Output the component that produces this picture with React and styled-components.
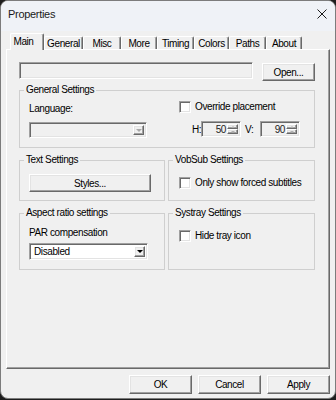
import React from 'react';
import styled, { createGlobalStyle } from 'styled-components';

const Global = createGlobalStyle`
  html, body { margin: 0; padding: 0; background: #1e1e1e; }
  body { width: 336px; height: 400px; overflow: hidden; font-family: "Liberation Sans", Arial, sans-serif; }
  #root { width: 336px; height: 400px; }
`;

const Window = styled.div`
  box-sizing: border-box;
  width: 336px;
  height: 399px;
  background: #f0f0f0;
  border: 1px solid #7c7c7c;
  border-radius: 8px;
  overflow: hidden;
  display: flex;
  flex-direction: column;
  font-size: 10px;
  letter-spacing: -0.4px;
  color: #000;
`;

const TitleBar = styled.div`
  flex: none;
  height: 30px;
  box-sizing: border-box;
  padding: 0 8px 4px 7px;
  display: flex;
  align-items: center;
  justify-content: space-between;
  background: #eff2f7;
`;

const Title = styled.span`
  font-size: 11px;
  letter-spacing: -0.3px;
  color: #1a1a1a;
`;

const TabStrip = styled.div`
  flex: none;
  height: 16px;
  margin-top: 2px;
  padding-left: 9px;
  display: flex;
  align-items: flex-end;
`;

const Tab = styled.div`
  box-sizing: border-box;
  position: relative;
  z-index: ${p => (p.$active ? 2 : 1)};
  width: ${p => p.$w}px;
  height: ${p => (p.$active ? 17 : 13)}px;
  margin-bottom: ${p => (p.$active ? -1 : 0)}px;
  padding-right: ${p => p.$pr || 0}px;
  padding-bottom: ${p => (p.$active ? 2 : 0)}px;
  background: #f0f0f0;
  border-top: 1px solid #fff;
  border-left: 1px solid #fff;
  border-right: 1px solid #696969;
  box-shadow: inset -1px 0 #a0a0a0;
  border-radius: 2px 2px 0 0;
  display: flex;
  align-items: center;
  justify-content: center;
  white-space: nowrap;
`;

const Pane = styled.div`
  flex: none;
  box-sizing: border-box;
  width: 324px;
  height: 320px;
  margin-left: 5px;
  border-top: 1px solid #fff;
  border-left: 1px solid #fff;
  border-right: 1px solid #696969;
  border-bottom: 1px solid #696969;
  box-shadow: inset -1px -1px #a0a0a0;
  padding: 12px 14px 0 12px;
  display: flex;
  flex-direction: column;
`;

const PathRow = styled.div`
  display: flex;
  align-items: flex-start;
  gap: 9px;
  height: 18px;
`;

const sunken = `
  box-sizing: border-box;
  border: 1px solid;
  border-color: #a0a0a0 #ffffff #ffffff #a0a0a0;
  box-shadow: inset 1px 1px #696969, inset -1px -1px #e3e3e3;
`;

const raised = `
  box-sizing: border-box;
  border: 1px solid;
  border-color: #ffffff #696969 #696969 #ffffff;
  box-shadow: inset -1px -1px #a0a0a0, inset 1px 1px #e3e3e3;
  background: #f0f0f0;
`;

const Edit = styled.div`
  ${sunken}
  flex: 1;
  height: 17px;
  background: #f0f0f0;
`;

const Button = styled.div`
  ${raised}
  flex: none;
  width: ${p => p.$w}px;
  height: ${p => p.$h || 18}px;
  margin-top: ${p => p.$mt || 0}px;
  display: flex;
  align-items: center;
  justify-content: center;
  color: #000;
`;

const Group = styled.fieldset`
  margin: ${p => p.$mt || 0}px 0 0 0;
  padding: 0;
  min-width: 0;
  border: 1px solid #cfcfcf;
  align-self: ${p => p.$self || 'stretch'};
`;

const Legend = styled.legend`
  margin-left: 4px;
  padding: 0 2px;
  line-height: 12px;
  height: 12px;
  color: #000;
`;

const GeneralBody = styled.div`
  display: grid;
  grid-template-columns: 118px 1fr;
  column-gap: 32px;
  padding: 0 0 9px 9px;
`;

const Col = styled.div`
  display: flex;
  flex-direction: column;
  align-items: flex-start;
`;

const Label = styled.div`
  line-height: 12px;
  height: 12px;
  margin-top: ${p => p.$mt || 0}px;
  white-space: nowrap;
`;

const Combo = styled.div`
  ${sunken}
  width: ${p => p.$w}px;
  height: ${p => p.$h}px;
  margin-top: ${p => p.$mt || 0}px;
  background: ${p => (p.$disabled ? '#f0f0f0' : '#ffffff')};
  display: flex;
  align-items: stretch;
  padding: 2px;
`;

const ComboText = styled.div`
  flex: 1;
  display: flex;
  align-items: center;
  padding-left: 2px;
`;

const ArrowButton = styled.div`
  ${raised}
  width: ${p => p.$w || 12}px;
  flex: none;
  display: flex;
  align-items: center;
  justify-content: center;
`;

const Triangle = styled.span`
  width: 0;
  height: 0;
  border-left: ${p => p.$s}px solid transparent;
  border-right: ${p => p.$s}px solid transparent;
  ${p => (p.$up ? 'border-bottom' : 'border-top')}: ${p => p.$s}px solid ${p => p.$c};
`;

const CheckRow = styled.div`
  display: flex;
  align-items: center;
  gap: 4px;
  height: 13px;
  margin-top: ${p => p.$mt || 0}px;
  margin-left: ${p => p.$ml || 0}px;
  white-space: nowrap;
`;

const Check = styled.span`
  ${sunken}
  width: 12px;
  height: 12px;
  flex: none;
  background: #ffffff;
`;

const SpinRow = styled.div`
  display: flex;
  align-items: center;
  height: 16px;
  margin-top: 8px;
  margin-left: 13px;
`;

const SpinLabel = styled.span`
  width: ${p => p.$w}px;
  padding-left: ${p => p.$pl || 0}px;
  box-sizing: border-box;
  flex: none;
  white-space: nowrap;
`;

const Spin = styled.div`
  ${sunken}
  width: 40px;
  height: 16px;
  background: #f0f0f0;
  display: flex;
  padding: 2px 2px 2px 2px;
`;

const SpinValue = styled.div`
  flex: 1;
  display: flex;
  align-items: center;
  justify-content: flex-end;
  padding-right: 1px;
  color: #222;
`;

const SpinButtons = styled.div`
  width: 11px;
  display: flex;
  flex-direction: column;
`;

const SpinHalf = styled.div`
  ${raised}
  flex: 1;
  display: flex;
  align-items: center;
  justify-content: center;
`;

const GroupRow = styled.div`
  display: grid;
  grid-template-columns: 146px 147px;
  column-gap: 3px;
  align-items: ${p => p.$align};
  margin-top: 6px;
`;

const GroupBody = styled.div`
  display: flex;
  flex-direction: column;
  align-items: flex-start;
  padding: 0 0 ${p => p.$pb || 0}px ${p => p.$pl || 9}px;
`;

const ButtonRow = styled.div`
  flex: none;
  width: 324px;
  margin: 6px 0 0 5px;
  display: flex;
  justify-content: flex-end;
  gap: 6px;
`;

const CloseIcon = () => (
  <svg width="10" height="10" viewBox="0 0 10 10" style={{ display: 'block' }}>
    <path d="M0.5 0.5 L9.5 9.5 M9.5 0.5 L0.5 9.5" stroke="#1b1b1b" strokeWidth="1" fill="none" />
  </svg>
);

const tabs = [
  { label: 'Main', w: 34, active: true, pr: 7 },
  { label: 'General', w: 39 },
  { label: 'Misc', w: 38 },
  { label: 'More', w: 36 },
  { label: 'Timing', w: 37 },
  { label: 'Colors', w: 35 },
  { label: 'Paths', w: 37 },
  { label: 'About', w: 36 },
];

export default function App() {
  return (
    <>
      <Global />
      <Window>
        <TitleBar>
          <Title>Properties</Title>
          <CloseIcon />
        </TitleBar>
        <TabStrip>
          {tabs.map(t => (
            <Tab key={t.label} $w={t.w} $active={t.active} $pr={t.pr}>
              {t.label}
            </Tab>
          ))}
        </TabStrip>
        <Pane>
          <PathRow>
            <Edit />
            <Button $w={53} $h={18} $mt={1}>Open...</Button>
          </PathRow>

          <Group $mt={4}>
            <Legend>General Settings</Legend>
            <GeneralBody>
              <Col>
                <Label $mt={7}>Language:</Label>
                <Combo $w={118} $h={16} $mt={7} $disabled>
                  <ComboText />
                  <ArrowButton $w={11}>
                    <Triangle $s={3} $c="#a8a8a8" />
                  </ArrowButton>
                </Combo>
              </Col>
              <Col>
                <CheckRow $mt={4}>
                  <Check />
                  <span>Override placement</span>
                </CheckRow>
                <SpinRow>
                  <SpinLabel $w={9}>H:</SpinLabel>
                  <Spin>
                    <SpinValue>50</SpinValue>
                    <SpinButtons>
                      <SpinHalf><Triangle $s={2} $up $c="#b0b0b0" /></SpinHalf>
                      <SpinHalf><Triangle $s={2} $c="#b0b0b0" /></SpinHalf>
                    </SpinButtons>
                  </Spin>
                  <SpinLabel $w={19} $pl={4}>V:</SpinLabel>
                  <Spin>
                    <SpinValue>90</SpinValue>
                    <SpinButtons>
                      <SpinHalf><Triangle $s={2} $up $c="#b0b0b0" /></SpinHalf>
                      <SpinHalf><Triangle $s={2} $c="#b0b0b0" /></SpinHalf>
                    </SpinButtons>
                  </Spin>
                </SpinRow>
              </Col>
            </GeneralBody>
          </Group>

          <GroupRow $align="stretch">
            <Group>
              <Legend>Text Settings</Legend>
              <GroupBody $pb={8}>
                <Button $w={122} $h={18} $mt={8}>Styles...</Button>
              </GroupBody>
            </Group>
            <Group>
              <Legend>VobSub Settings</Legend>
              <GroupBody $pl={10}>
                <CheckRow $mt={10}>
                  <Check />
                  <span>Only show forced subtitles</span>
                </CheckRow>
              </GroupBody>
            </Group>
          </GroupRow>

          <GroupRow $align="start">
            <Group>
              <Legend>Aspect ratio settings</Legend>
              <GroupBody $pb={9}>
                <Label $mt={8}>PAR compensation</Label>
                <Combo $w={119} $h={17} $mt={4}>
                  <ComboText>Disabled</ComboText>
                  <ArrowButton $w={11}>
                    <Triangle $s={3} $c="#000" />
                  </ArrowButton>
                </Combo>
              </GroupBody>
            </Group>
            <Group>
              <Legend>Systray Settings</Legend>
              <GroupBody $pl={10} $pb={11}>
                <CheckRow $mt={10}>
                  <Check />
                  <span>Hide tray icon</span>
                </CheckRow>
              </GroupBody>
            </Group>
          </GroupRow>
        </Pane>
        <ButtonRow>
          <Button $w={63} $h={19}>OK</Button>
          <Button $w={63} $h={19}>Cancel</Button>
          <Button $w={63} $h={19}>Apply</Button>
        </ButtonRow>
      </Window>
    </>
  );
}
